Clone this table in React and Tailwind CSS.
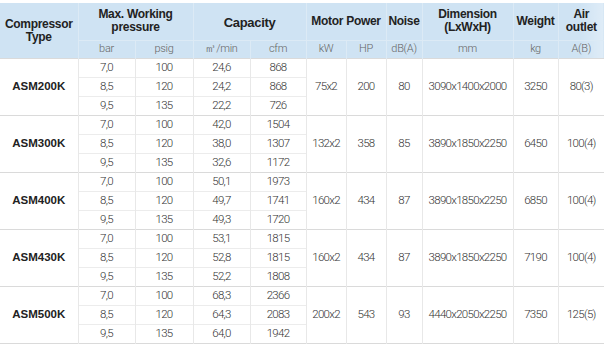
import React from 'react';

const groups = [
    { model: 'ASM200K', rows: [['7,0', '100', '24,6', '868'], ['8,5', '120', '24,2', '868'], ['9,5', '135', '22,2', '726']], kw: '75x2', hp: '200', db: '80', dim: '3090x1400x2000', kg: '3250', air: '80(3)' },
    { model: 'ASM300K', rows: [['7,0', '100', '42,0', '1504'], ['8,5', '120', '38,0', '1307'], ['9,5', '135', '32,6', '1172']], kw: '132x2', hp: '358', db: '85', dim: '3890x1850x2250', kg: '6450', air: '100(4)' },
    { model: 'ASM400K', rows: [['7,0', '100', '50,1', '1973'], ['8,5', '120', '49,7', '1741'], ['9,5', '135', '49,3', '1720']], kw: '160x2', hp: '434', db: '87', dim: '3890x1850x2250', kg: '6850', air: '100(4)' },
    { model: 'ASM430K', rows: [['7,0', '100', '53,1', '1815'], ['8,5', '120', '52,8', '1815'], ['9,5', '135', '52,2', '1808']], kw: '160x2', hp: '434', db: '87', dim: '3890x1850x2250', kg: '7190', air: '100(4)' },
    { model: 'ASM500K', rows: [['7,0', '100', '68,3', '2366'], ['8,5', '120', '64,3', '2083'], ['9,5', '135', '64,0', '1942']], kw: '200x2', hp: '543', db: '93', dim: '4440x2050x2250', kg: '7350', air: '125(5)' },
];

const widths = [78, 57, 58, 57, 56, 40, 40, 36, 91, 45, 46];

const head = "font-bold text-[12px] leading-[13px] tracking-[-0.3px] text-[#222] text-center align-middle border-l border-[#dceaf5] first:border-l-0 p-0";
const sub = "font-light text-[11px] tracking-[-0.3px] text-[#666] text-center align-middle border-l border-t border-[#dceaf5] h-[18px] p-0";
const cell = "font-light text-[11.5px] tracking-[-0.7px] text-[#333] text-center align-middle border-l border-[#e8e8e8] p-0";

function App() {
    return (
        <div className="w-[612px] h-[347px] bg-white pt-[3px]" style={{ fontFamily: 'Roboto, "Noto Sans", sans-serif' }}>
            <table className="table-fixed border-collapse w-[604px]">
                <colgroup>
                    {widths.map((w, i) => <col key={i} style={{ width: w }} />)}
                </colgroup>
                <thead className="bg-[#cfe3f3]" style={{ fontFamily: '"Liberation Sans", Arial, sans-serif' }}>
                    <tr className="h-[37px]">
                        <th rowSpan={2} className={head + " pt-[2px]"}>Compressor<br />Type</th>
                        <th colSpan={2} className={head}>Max. Working<br />pressure</th>
                        <th colSpan={2} className={head + " text-[13px] pt-[2px]"}>Capacity</th>
                        <th colSpan={2} className={head}>Motor Power</th>
                        <th className={head}>Noise</th>
                        <th className={head}>Dimension<br />(LxWxH)</th>
                        <th className={head}>Weight</th>
                        <th className={head + " bg-linear-to-r from-[#cfe3f3] via-[#cfe3f3] to-[#dfecf7]"}>Air<br />outlet</th>
                    </tr>
                    <tr style={{ fontFamily: 'Roboto, sans-serif' }}>
                        <th className={sub}>bar</th>
                        <th className={sub}>psig</th>
                        <th className={sub}>㎥/min</th>
                        <th className={sub}>cfm</th>
                        <th className={sub}>kW</th>
                        <th className={sub}>HP</th>
                        <th className={sub}>dB(A)</th>
                        <th className={sub}>mm</th>
                        <th className={sub}>kg</th>
                        <th className={sub + " bg-linear-to-r from-[#cfe3f3] via-[#cfe3f3] to-[#dfecf7]"}>A(B)</th>
                    </tr>
                </thead>
                <tbody>
                    {groups.map((g) => g.rows.map((r, i) => (
                        <tr key={g.model + i} className={"h-[19px] " + (i === 0 ? "border-t border-[#dadada]" : "border-t border-[#ececec]")}>
                            {i === 0 && (
                                <td rowSpan={3} className="font-bold text-[11.5px] text-[#222] text-center align-middle p-0" style={{ fontFamily: '"Liberation Sans", Arial, sans-serif' }}>{g.model}</td>
                            )}
                            {r.map((v, j) => <td key={j} className={cell}>{v}</td>)}
                            {i === 0 && (
                                <>
                                    <td rowSpan={3} className={cell}>{g.kw}</td>
                                    <td rowSpan={3} className={cell}>{g.hp}</td>
                                    <td rowSpan={3} className={cell}>{g.db}</td>
                                    <td rowSpan={3} className={cell}>{g.dim}</td>
                                    <td rowSpan={3} className={cell}>{g.kg}</td>
                                    <td rowSpan={3} className={cell}>{g.air}</td>
                                </>
                            )}
                        </tr>
                    )))}
                    <tr className="border-t border-[#dadada]"></tr>
                </tbody>
            </table>
        </div>
    );
}

export default App;
